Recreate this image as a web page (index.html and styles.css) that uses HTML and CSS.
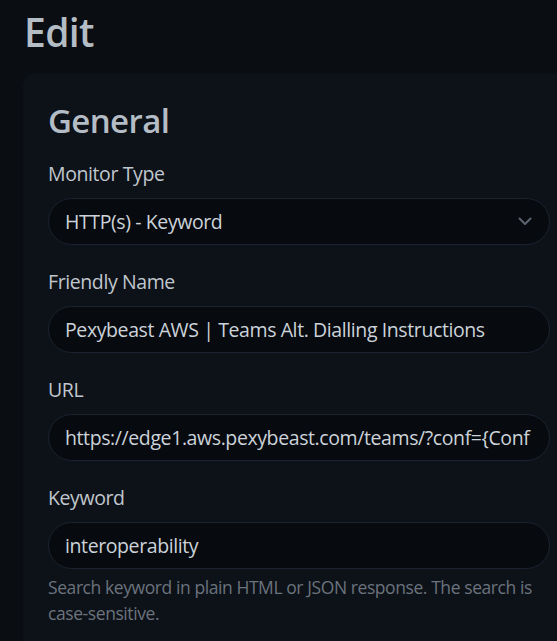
FILE: index.html
```html
<!DOCTYPE html>
<html lang="en">
<head>
<meta charset="utf-8">
<title>Edit</title>
<link rel="stylesheet" href="styles.css">
</head>
<body>
<main class="page">
  <h1 class="title">Edit</h1>
  <section class="card">
    <h2 class="card-title">General</h2>
    <div class="field">
      <label class="field-label">Monitor Type</label>
      <div class="control select">
        <span class="control-text">HTTP(s) - Keyword</span>
        <svg class="chevron" width="14" height="9" viewBox="0 0 14 9" aria-hidden="true"><path d="M1.5 1.5 L7 7 L12.5 1.5" fill="none" stroke="#5b6470" stroke-width="2" stroke-linecap="round" stroke-linejoin="round"/></svg>
      </div>
    </div>
    <div class="field">
      <label class="field-label">Friendly Name</label>
      <div class="control"><span class="control-text">Pexybeast AWS | Teams Alt. Dialling Instructions</span></div>
    </div>
    <div class="field">
      <label class="field-label">URL</label>
      <div class="control"><span class="control-text">https://edge1.aws.pexybeast.com/teams/?conf={Conf</span></div>
    </div>
    <div class="field">
      <label class="field-label">Keyword</label>
      <div class="control"><span class="control-text">interoperability</span></div>
      <div class="help">Search keyword in plain HTML or JSON response. The search is case-sensitive.</div>
    </div>
  </section>
</main>
</body>
</html>
```
FILE: styles.css
```css
* { box-sizing: border-box; }
html, body {
  margin: 0;
  background: #0a0d11;
  overflow: hidden;
}
body {
  font-family: "Open Sans", "Noto Sans", sans-serif;
  color: #c3c9d0;
  width: 557px;
  height: 641px;
}
.page {
  padding: 0 0 0 23px;
}
.title {
  margin: 0;
  padding-top: 4px;
  font-size: 39px;
  font-weight: 600;
  line-height: 56px;
  letter-spacing: -0.6px;
  color: #b4bcc5;
  padding-left: 1px;
}
.card {
  margin-top: 14px;
  width: 552px;
  height: 580px;
  background: #0d1118;
  border-radius: 10px;
  padding: 25px;
  overflow: hidden;
}
.card-title {
  margin: 0 0 16px 0;
  padding-top: 1px;
  font-size: 33px;
  font-weight: 600;
  line-height: 41px;
  letter-spacing: -0.6px;
  color: #b4bcc5;
}
.field {
  margin-bottom: 20px;
}
.field-label {
  display: block;
  padding-top: 2px;
  font-size: 19.5px;
  line-height: 30px;
  letter-spacing: -0.4px;
  margin-bottom: 9px;
  color: #c0c7ce;
}
.control {
  display: flex;
  align-items: center;
  height: 47px;
  border: 1px solid #1c2330;
  border-radius: 24px;
  background: #070a0f;
  padding: 0 14px 0 16px;
  white-space: nowrap;
}
.control-text {
  flex: 1;
  font-size: 19.5px;
  letter-spacing: -0.4px;
  color: #ccd3da;
}
.select .chevron {
  flex: none;
  margin-right: 3px;
}
.help {
  margin-top: 5px;
  font-size: 17.5px;
  line-height: 26px;
  letter-spacing: -0.42px;
  color: #6b737d;
}
```
